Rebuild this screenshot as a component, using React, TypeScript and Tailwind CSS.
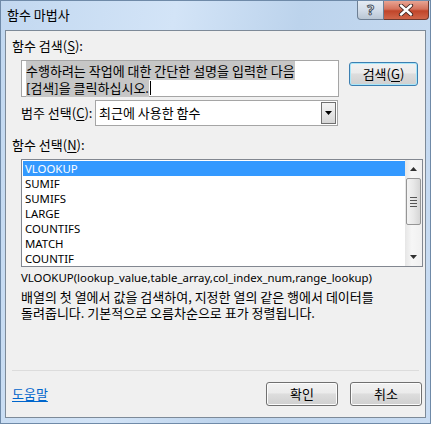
import React from 'react';

const FONT = { fontFamily: '"Noto Sans CJK KR", "Noto Sans", sans-serif' };
const LATIN = { fontFamily: '"Noto Sans", "Noto Sans CJK KR", sans-serif' };

const functions = ['VLOOKUP', 'SUMIF', 'SUMIFS', 'LARGE', 'COUNTIFS', 'MATCH', 'COUNTIF'];

function Win7Button({ label, hot, className }: { label: React.ReactNode; hot?: boolean; className?: string }) {
  return (
    <div
      className={`flex items-center justify-center rounded-[3px] border text-[13px] text-black ${
        hot ? 'border-[#3c7fb1] shadow-[inset_0_0_0_1px_#a8e6f9]' : 'border-[#707070] shadow-[inset_0_0_0_1px_#fcfcfc]'
      } bg-[linear-gradient(#f2f2f2_0%,#ebebeb_45%,#dddddd_50%,#cfcfcf_100%)] ${className ?? ''}`}
    >
      {label}
    </div>
  );
}

function Mnemonic({ ch }: { ch: string }) {
  return <span className="underline underline-offset-2">{ch}</span>;
}

export default function App() {
  return (
    <div
      className="flex h-[424px] w-[431px] flex-col overflow-hidden border border-[#6f8aa8] bg-[linear-gradient(100deg,#c2d8f0_0%,#d3e4f7_35%,#bcd3ec_60%,#c9dcf2_100%)]"
      style={FONT}
    >
      {/* title bar */}
      <div className="flex h-[29px] shrink-0 items-start">
        <div className="ml-[6px] mt-[5px] text-[13px] leading-[18px] text-black">함수 마법사</div>
        <div className="ml-auto mr-[1px] flex">
          <div className="flex h-[19px] w-[27px] items-center justify-center rounded-bl-[4px] border border-t-0 border-[#6d7f94] bg-[linear-gradient(#e4ebf3_0%,#d3dde9_50%,#b9c6d4_100%)]">
            <span className="text-[14px] font-bold leading-none text-white [-webkit-text-stroke:1px_#4a5462]" style={LATIN}>
              ?
            </span>
          </div>
          <div className="flex h-[19px] w-[45px] items-center justify-center rounded-br-[4px] border border-l-0 border-t-0 border-[#6d3a30] bg-[linear-gradient(#e8a493_0%,#d4725c_45%,#c0452a_55%,#d0664a_100%)]">
            <svg width="16" height="12" viewBox="0 0 16 12">
              <path d="M3 1.5 L13 10.5 M13 1.5 L3 10.5" stroke="#3c2420" strokeWidth="4.2" strokeLinecap="round" />
              <path d="M3 1.5 L13 10.5 M13 1.5 L3 10.5" stroke="#ffffff" strokeWidth="2.4" strokeLinecap="round" />
            </svg>
          </div>
        </div>
      </div>

      {/* client area */}
      <div className="mx-[4px] flex h-[388px] shrink-0 flex-col border border-[#7d8a98] bg-[#f0f0f0] text-[13px] text-black">
        <div className="ml-[6px] mt-[7px] leading-[16px]">
          함수 검색(<Mnemonic ch="S" />):
        </div>

        <div className="mt-[6px] flex items-start">
          <div className="ml-[15px] h-[37px] w-[318px] border border-[#a5a5a5] bg-white px-[4px] pt-[2px] leading-[16px]">
            <span className="bg-[#c6c6c6]">수행하려는 작업에 대한 간단한 설명을 입력한 다음</span>
            <br />
            <span className="bg-[#c6c6c6]">[검색]을 클릭하십시오.</span>
            <span className="ml-[1px] inline-block h-[14px] w-px translate-y-[2px] bg-black" />
          </div>
          <Win7Button hot label={<span>검색(<Mnemonic ch="G" />)</span>} className="ml-[10px] mt-[2px] h-[24px] w-[69px]" />
        </div>

        <div className="mt-[3px] flex items-center">
          <div className="ml-[15px] w-[74px] whitespace-nowrap leading-[16px]">
            범주 선택(<Mnemonic ch="C" />):
          </div>
          <div className="flex h-[26px] w-[243px] items-center border border-[#a5a5a5] bg-white">
            <span className="ml-[3px]">최근에 사용한 함수</span>
            <div className="ml-auto mr-px flex h-[22px] w-[15px] items-center justify-center border border-[#707070] bg-[linear-gradient(#f4f4f4_0%,#e6e6e6_50%,#d6d6d6_100%)]">
              <svg width="7" height="4" viewBox="0 0 7 4">
                <path d="M0 0 H7 L3.5 4 Z" fill="#000" />
              </svg>
            </div>
          </div>
        </div>

        <div className="ml-[6px] mt-[11px] leading-[16px]">
          함수 선택(<Mnemonic ch="N" />):
        </div>

        <div className="ml-[15px] mt-[6px] flex h-[108px] w-[402px] border border-[#828790] bg-white">
          <div className="flex flex-1 flex-col pl-px pt-px" style={LATIN}>
            {functions.map((f, i) => (
              <div
                key={f}
                className={`h-[15px] pl-[2px] text-[11.4px] leading-[15px] ${i === 0 ? 'bg-[#3399ff] text-white' : 'text-black'}`}
              >
                {f}
              </div>
            ))}
          </div>
          {/* scrollbar */}
          <div className="flex w-[17px] flex-col items-center bg-[linear-gradient(90deg,#e6e6e6,#f6f6f6_40%,#f0f0f0)]">
            <div className="flex h-[18px] w-full items-center justify-center">
              <svg width="7" height="4" viewBox="0 0 7 4">
                <path d="M3.5 0 L7 4 H0 Z" fill="#303030" />
              </svg>
            </div>
            <div className="flex h-[47px] w-[15px] flex-col items-center justify-center gap-[2px] rounded-[2px] border border-[#959595] bg-[linear-gradient(90deg,#f3f3f3,#e8e8e8_50%,#d6d6d6)]">
              <div className="h-px w-[7px] bg-[#555]" />
              <div className="h-px w-[7px] bg-[#555]" />
              <div className="h-px w-[7px] bg-[#555]" />
              <div className="h-px w-[7px] bg-[#555]" />
            </div>
            <div className="mt-auto flex h-[18px] w-full items-center justify-center">
              <svg width="7" height="4" viewBox="0 0 7 4">
                <path d="M0 0 H7 L3.5 4 Z" fill="#303030" />
              </svg>
            </div>
          </div>
        </div>

        <div className="ml-[15px] mt-[3px] text-[11.4px] leading-[16px]" style={LATIN}>
          VLOOKUP(lookup_value,table_array,col_index_num,range_lookup)
        </div>
        <div className="ml-[15px] mt-[3px] leading-[16px]">
          배열의 첫 열에서 값을 검색하여, 지정한 열의 같은 행에서 데이터를
          <br />
          돌려줍니다. 기본적으로 오름차순으로 표가 정렬됩니다.
        </div>

        <div className="mx-[6px] mt-auto h-px bg-[#dcdcdc]" />

        <div className="flex h-[46px] items-center">
          <span className="ml-[6px] text-[#0066cc] underline underline-offset-2">도움말</span>
          <Win7Button label="확인" className="ml-auto h-[24px] w-[72px]" />
          <Win7Button label="취소" className="ml-[12px] mr-[3px] h-[24px] w-[72px]" />
        </div>
      </div>
    </div>
  );
}
